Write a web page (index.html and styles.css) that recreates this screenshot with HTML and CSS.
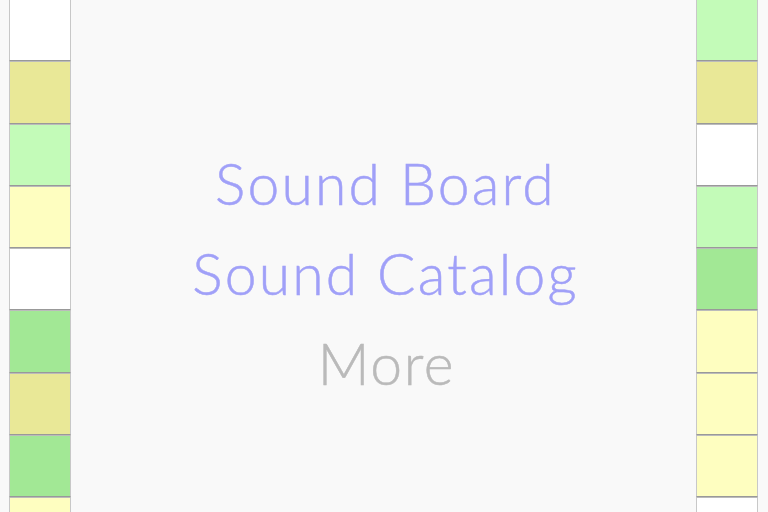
FILE: index.html
```html
<!DOCTYPE html>
<html lang="en">
<head>
  <meta charset="UTF-8" />
  <meta name="viewport" content="width=device-width, initial-scale=1.0"/>
  <title>Sound Board</title>
  <link rel="stylesheet" href="styles.css">
</head>
<body>

  <div class="board">
    <!-- LEFT PAD COLUMN -->
    <div class="pads">
      <div class="pad white"></div>
      <div class="pad khaki"></div>
      <div class="pad mint"></div>
      <div class="pad cream"></div>
      <div class="pad white"></div>
      <div class="pad green"></div>
      <div class="pad khaki"></div>
      <div class="pad green"></div>
      <div class="pad cream"></div>
    </div>

    <!-- MENU -->
    <div class="menu">
      <a class="item" href="#">Sound Board</a>
      <a class="item" href="#">Sound Catalog</a>
      <a class="item more" href="#">More</a>
    </div>

    <!-- RIGHT PAD COLUMN -->
    <div class="pads">
      <div class="pad mint"></div>
      <div class="pad khaki"></div>
      <div class="pad white"></div>
      <div class="pad mint"></div>
      <div class="pad green"></div>
      <div class="pad cream"></div>
      <div class="pad cream"></div>
      <div class="pad cream"></div>
      <div class="pad white"></div>
    </div>
  </div>

</body>
</html>
```

FILE: styles.css
```css
body {
  margin: 0;
  padding: 0;
  background: #f9f9f9;
  font-family: Lato, "Noto Sans", sans-serif;
  overflow: hidden;
}
.board {
  display: grid;
  grid-template-columns: 62px 1fr 62px;
  height: 512px;
  padding: 0 10px 0 9px;
  overflow: hidden;
}
.pads {
  display: flex;
  flex-direction: column;
  margin-top: -1px;
}
.pad {
  flex: 0 0 62.3px;
  box-sizing: border-box;
  border-left: 1px solid #c8c8c8;
  border-right: 1px solid #c8c8c8;
  border-bottom: 1px solid #999;
  border-top: 1px solid #bbb;
}
.white { background: #ffffff; }
.khaki { background: #e9e897; }
.mint  { background: #c3fbb8; }
.cream { background: #fefec0; }
.green { background: #a2e895; }

.menu {
  display: flex;
  flex-direction: column;
  align-items: center;
  justify-content: center;
  padding-bottom: 14px;
}
.item {
  font-size: 57px;
  font-weight: 300;
  line-height: 90px;
  letter-spacing: 2.2px;
  padding-left: 4px;
  -webkit-text-stroke: 0.5px currentColor;
  color: #a0a0f8;
  text-decoration: none;
}
.more {
  color: #bababa;
  letter-spacing: 1.6px;
  padding-left: 6px;
}
```
